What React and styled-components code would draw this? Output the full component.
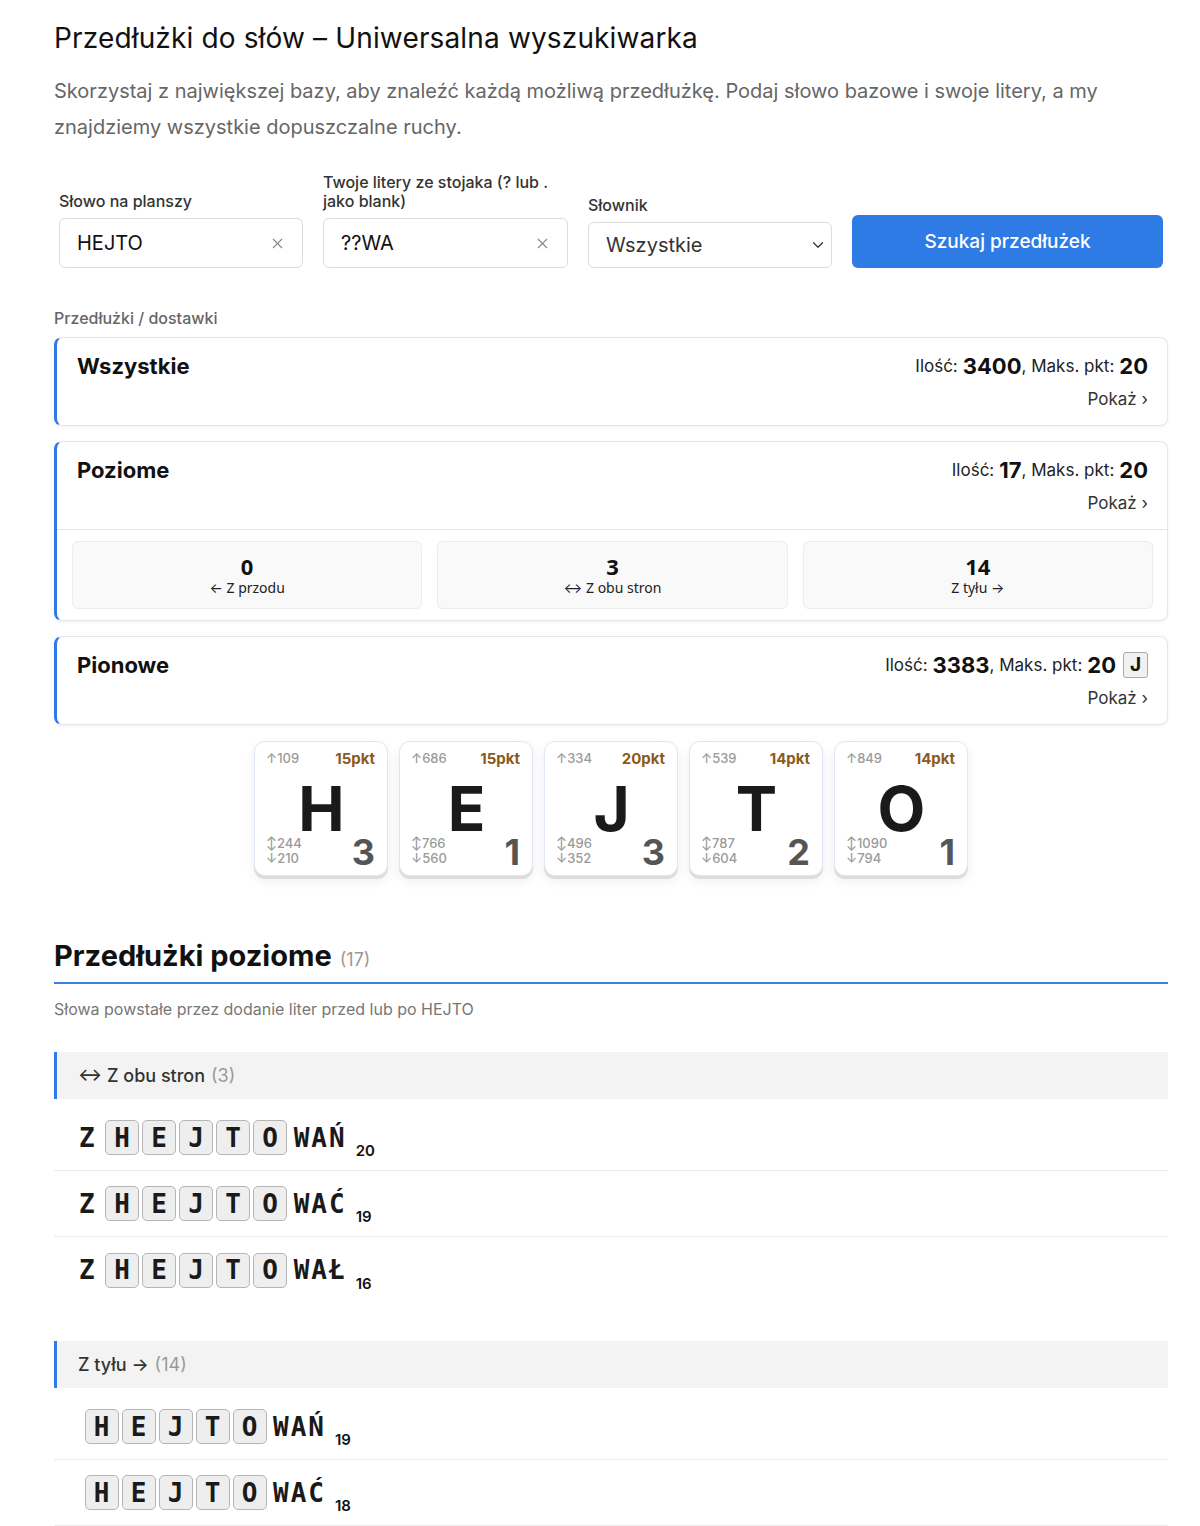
import React from 'react'
import styled, { createGlobalStyle } from 'styled-components'
import { X, ChevronDown } from 'lucide-react'

const GlobalStyle = createGlobalStyle`
  body {
    margin: 0;
    background: #fff;
    font-family: Inter, "Noto Sans", "Liberation Sans", sans-serif;
    color: #1a1a1a;
  }
  * { box-sizing: border-box; }
`

const Page = styled.div`
  width: 1114px;
  margin-left: 54px;
  padding: 20px 0 40px;
`

const Title = styled.h1`
  margin: 0;
  font-size: 28px;
  line-height: 36px;
  font-weight: 400;
  color: #111;
  letter-spacing: 0.15px;
`

const Lead = styled.p`
  margin: 17px 0 0;
  font-size: 20px;
  line-height: 36px;
  color: #666;
`

const Form = styled.div`
  display: grid;
  grid-template-columns: 244px 245px 244px 311px;
  column-gap: 20px;
  align-items: end;
  padding: 0 5px;
  margin-top: 28px;
`

const Field = styled.label`
  display: flex;
  flex-direction: column;
  gap: 7px;
`

const FieldLabel = styled.span`
  font-size: 16px;
  line-height: 19px;
  font-weight: 500;
  color: #333;
  padding-right: 10px;
`

const InputBox = styled.div`
  display: flex;
  align-items: center;
  justify-content: space-between;
  height: ${p => p.$h || 50}px;
  padding: 0 ${p => p.$select ? 4 : 16}px 0 17px;
  border: 1px solid #dcdcdc;
  border-radius: 6px;
  font-size: 20px;
  color: ${p => p.$select ? '#333' : '#111'};
  background: #fff;
`

const SearchButton = styled.button`
  height: 53px;
  border: none;
  border-radius: 6px;
  background: #2f7be5;
  color: #fff;
  font-family: inherit;
  font-size: 19px;
  font-weight: 500;
`

const SectionLabel = styled.div`
  margin-top: 40px;
  font-size: 16px;
  font-weight: 500;
  color: #666;
`

const Cards = styled.div`
  display: flex;
  flex-direction: column;
  gap: 15px;
  margin-top: 9px;
`

const Card = styled.div`
  border: 1px solid #e6e6e6;
  border-left: 3px solid #2f7be5;
  border-radius: 8px;
  background: #fff;
  box-shadow: 0 1px 3px rgba(0, 0, 0, 0.06);
`

const CardHead = styled.div`
  display: flex;
  justify-content: space-between;
  padding: 13px 19px 14px 20px;
`

const CardTitle = styled.div`
  font-size: 22px;
  line-height: 30px;
  font-weight: 700;
  color: #111;
`

const Stats = styled.div`
  display: flex;
  flex-direction: column;
  align-items: flex-end;
  gap: 6px;
`

const StatLine = styled.div`
  display: flex;
  align-items: center;
  font-size: 17px;
  line-height: 30px;
  color: #222;
  b {
    font-size: 22px;
    font-weight: 700;
    color: #111;
    margin-left: 5px;
  }
`

const Badge = styled.span`
  display: inline-flex;
  align-items: center;
  justify-content: center;
  width: 25px;
  height: 26px;
  margin-left: 7px;
  border: 1px solid #aaa;
  border-radius: 3px;
  background: #f1f1f1;
  font-size: 19px;
  font-weight: 700;
  color: #111;
`

const ShowLink = styled.div`
  font-size: 17px;
  line-height: 24px;
  color: #333;
`

const SubGrid = styled.div`
  display: grid;
  grid-template-columns: repeat(3, 1fr);
  gap: 15px;
  padding: 11px 14px 11px 15px;
  border-top: 1px solid #e6e6e6;
`

const SubCard = styled.div`
  display: flex;
  flex-direction: column;
  align-items: center;
  justify-content: center;
  height: 68px;
  border: 1px solid #ececec;
  border-radius: 6px;
  background: #f9f9f9;
  font-family: "Noto Sans", Inter, sans-serif;
`

const SubNum = styled.div`
  font-size: 22px;
  line-height: 26px;
  font-weight: 700;
  color: #111;
`

const SubText = styled.div`
  font-size: 14px;
  line-height: 18px;
  color: #222;
`

const TileRow = styled.div`
  display: flex;
  justify-content: center;
  gap: 11px;
  margin-top: 16px;
`

const Tile = styled.div`
  display: flex;
  flex-direction: column;
  width: 134px;
  height: 135px;
  padding: 7px 12px 8px 11px;
  border: 1px solid #dfe7f4;
  border-radius: 11px;
  background: #fff;
  box-shadow: 0 3px 0 #dcdcdc, 0 5px 12px rgba(0, 0, 0, 0.07);
`

const TileTop = styled.div`
  display: flex;
  justify-content: space-between;
  align-items: center;
  height: 18px;
`

const Small = styled.div`
  font-size: 13px;
  line-height: 15px;
  font-weight: 500;
  color: #9a9a9a;
`

const Points = styled.div`
  font-size: 15px;
  font-weight: 700;
  color: #8b5a1c;
`

const BigLetter = styled.div`
  align-self: center;
  font-size: 62px;
  line-height: 48px;
  font-weight: 700;
  color: #1a1a1a;
  margin-top: 18px;
  padding-left: 2px;
`

const TileBottom = styled.div`
  display: flex;
  justify-content: space-between;
  align-items: flex-end;
  margin-top: 2px;
`

const TileValue = styled.div`
  font-size: 36px;
  line-height: 34px;
  font-weight: 700;
  color: #555;
  margin-bottom: -3px;
`

const SectionHead = styled.h2`
  display: flex;
  align-items: baseline;
  gap: 8px;
  margin: 60px 0 0;
  padding-bottom: 2px;
  border-bottom: 2px solid #3a7ee0;
  font-size: 29px;
  line-height: 40px;
  font-weight: 700;
  color: #111;
  span {
    font-size: 18px;
    font-weight: 400;
    color: #999;
  }
`

const SectionSub = styled.div`
  margin-top: 14px;
  font-size: 16px;
  line-height: 22px;
  color: #777;
`

const Group = styled.div`
  margin-top: ${p => p.$first ? 32 : 38}px;
`

const GroupHead = styled.div`
  display: flex;
  align-items: center;
  gap: 6px;
  height: 47px;
  padding-left: 21px;
  border-left: 3px solid #2f7be5;
  background: #f3f3f3;
  font-size: 18px;
  font-weight: 500;
  color: #333;
  span {
    font-weight: 400;
    color: #999;
  }
`

const Rows = styled.div`
  margin-top: 6px;
`

const WordRow = styled.div`
  display: flex;
  align-items: center;
  height: 66px;
  padding-left: ${p => p.$indent}px;
  border-bottom: ${p => p.$last ? 'none' : '1px solid #ebebeb'};
  font-family: "DejaVu Sans Mono", "Liberation Mono", monospace;
  font-size: 26px;
  font-weight: 700;
  color: #1a1a1a;
`

const Extra = styled.span`
  letter-spacing: 2px;
  margin: ${p => p.$side === 'pre' ? '0 7px 0 0' : '0 0 0 5px'};
`

const Boxed = styled.span`
  display: inline-flex;
  align-items: center;
  justify-content: center;
  width: 34px;
  height: 35px;
  margin: 0 1.5px;
  border: 1px solid #b5b5b5;
  border-radius: 5px;
  background: #eeeeee;
`

const Score = styled.span`
  align-self: flex-end;
  margin: 0 0 10px 9px;
  font-family: Inter, sans-serif;
  font-size: 15px;
  font-weight: 600;
  color: #111;
`

const tiles = [
  { l: 'H', up: 109, both: 244, down: 210, pts: 15, v: 3 },
  { l: 'E', up: 686, both: 766, down: 560, pts: 15, v: 1 },
  { l: 'J', up: 334, both: 496, down: 352, pts: 20, v: 3 },
  { l: 'T', up: 539, both: 787, down: 604, pts: 14, v: 2 },
  { l: 'O', up: 849, both: 1090, down: 794, pts: 14, v: 1 },
]

const groups = [
  {
    head: '↔ Z obu stron',
    count: 3,
    indent: 25,
    words: [
      { pre: 'Z', post: 'WAŃ', score: 20 },
      { pre: 'Z', post: 'WAĆ', score: 19 },
      { pre: 'Z', post: 'WAŁ', score: 16 },
    ],
  },
  {
    head: 'Z tyłu →',
    count: 14,
    indent: 29,
    words: [
      { pre: '', post: 'WAŃ', score: 19 },
      { pre: '', post: 'WAĆ', score: 18 },
    ],
    open: true,
  },
]

function Word({ w, indent, last }) {
  return (
    <WordRow $indent={indent} $last={last}>
      {w.pre && <Extra $side="pre">{w.pre}</Extra>}
      {'HEJTO'.split('').map((c, i) => <Boxed key={i}>{c}</Boxed>)}
      <Extra $side="post">{w.post}</Extra>
      <Score>{w.score}</Score>
    </WordRow>
  )
}

export default function App() {
  return (
    <Page>
      <GlobalStyle />
      <Title>Przedłużki do słów – Uniwersalna wyszukiwarka</Title>
      <Lead>
        Skorzystaj z największej bazy, aby znaleźć każdą możliwą przedłużkę. Podaj słowo bazowe i swoje litery, a my znajdziemy wszystkie dopuszczalne ruchy.
      </Lead>

      <Form>
        <Field>
          <FieldLabel>Słowo na planszy</FieldLabel>
          <InputBox>HEJTO <X size={17} color="#888" strokeWidth={1.5} /></InputBox>
        </Field>
        <Field>
          <FieldLabel>Twoje litery ze stojaka (? lub . jako blank)</FieldLabel>
          <InputBox>??WA <X size={17} color="#888" strokeWidth={1.5} /></InputBox>
        </Field>
        <Field>
          <FieldLabel>Słownik</FieldLabel>
          <InputBox $h={46} $select>Wszystkie <ChevronDown size={18} color="#333" strokeWidth={1.6} /></InputBox>
        </Field>
        <SearchButton>Szukaj przedłużek</SearchButton>
      </Form>

      <SectionLabel>Przedłużki / dostawki</SectionLabel>
      <Cards>
        <Card>
          <CardHead>
            <CardTitle>Wszystkie</CardTitle>
            <Stats>
              <StatLine>Ilość:<b>3400</b>, Maks. pkt:<b>20</b></StatLine>
              <ShowLink>Pokaż ›</ShowLink>
            </Stats>
          </CardHead>
        </Card>
        <Card>
          <CardHead>
            <CardTitle>Poziome</CardTitle>
            <Stats>
              <StatLine>Ilość:<b>17</b>, Maks. pkt:<b>20</b></StatLine>
              <ShowLink>Pokaż ›</ShowLink>
            </Stats>
          </CardHead>
          <SubGrid>
            <SubCard><SubNum>0</SubNum><SubText>← Z przodu</SubText></SubCard>
            <SubCard><SubNum>3</SubNum><SubText>↔ Z obu stron</SubText></SubCard>
            <SubCard><SubNum>14</SubNum><SubText>Z tyłu →</SubText></SubCard>
          </SubGrid>
        </Card>
        <Card>
          <CardHead>
            <CardTitle>Pionowe</CardTitle>
            <Stats>
              <StatLine>Ilość:<b>3383</b>, Maks. pkt:<b>20</b><Badge>J</Badge></StatLine>
              <ShowLink>Pokaż ›</ShowLink>
            </Stats>
          </CardHead>
        </Card>
      </Cards>

      <TileRow>
        {tiles.map(t => (
          <Tile key={t.l}>
            <TileTop>
              <Small>↑{t.up}</Small>
              <Points>{t.pts}pkt</Points>
            </TileTop>
            <BigLetter>{t.l}</BigLetter>
            <TileBottom>
              <div>
                <Small>↕{t.both}</Small>
                <Small>↓{t.down}</Small>
              </div>
              <TileValue>{t.v}</TileValue>
            </TileBottom>
          </Tile>
        ))}
      </TileRow>

      <SectionHead>Przedłużki poziome <span>(17)</span></SectionHead>
      <SectionSub>Słowa powstałe przez dodanie liter przed lub po HEJTO</SectionSub>

      {groups.map((g, gi) => (
        <Group key={g.head} $first={gi === 0}>
          <GroupHead>{g.head} <span>({g.count})</span></GroupHead>
          <Rows>
            {g.words.map((w, i) => (
              <Word key={i} w={w} indent={g.indent} last={!g.open && i === g.words.length - 1} />
            ))}
          </Rows>
        </Group>
      ))}
    </Page>
  )
}
